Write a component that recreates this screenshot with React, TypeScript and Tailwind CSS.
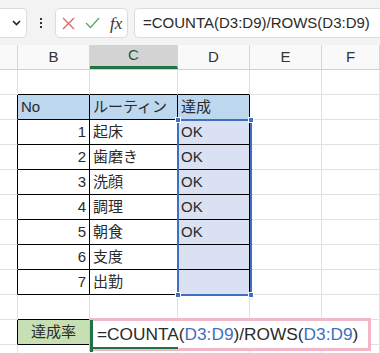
import React from 'react';

const cols = [18, 72, 88, 72, 72, 58];
const font = '"Liberation Sans", "Noto Sans CJK JP", sans-serif';

type Cell = { text?: string; align?: 'left' | 'right' | 'center'; bg?: string; table?: boolean };

// rows 1..12 of the sheet, columns A..F
const rows: Cell[][] = [
  [{}, {}, {}, {}, {}, {}],
  [{}, { text: 'No', bg: 'bg-[#bdd7ee]', table: true }, { text: 'ルーティン', bg: 'bg-[#bdd7ee]', table: true }, { text: '達成', bg: 'bg-[#bdd7ee]', table: true }, {}, {}],
  ...[
    ['1', '起床', 'OK'],
    ['2', '歯磨き', 'OK'],
    ['3', '洗顔', 'OK'],
    ['4', '調理', 'OK'],
    ['5', '朝食', 'OK'],
    ['6', '支度', ''],
    ['7', '出勤', ''],
  ].map(([n, r, d]) => [
    {},
    { text: n, align: 'right' as const, table: true },
    { text: r, table: true },
    { text: d, bg: 'bg-[#d9e1f2]', table: true },
    {},
    {},
  ]),
  [{}, {}, {}, {}, {}, {}],
  [{}, { text: '達成率', align: 'center' as const, bg: 'bg-[#c6e0b4]', table: true }, {}, {}, {}, {}],
  [{}, {}, {}, {}, {}, {}],
];

function isTable(r: number, c: number) {
  return !!rows[r]?.[c]?.table;
}

function Handle({ className }: { className: string }) {
  return <div className={`absolute w-[6px] h-[6px] bg-[#3f6fc1] border border-white ${className}`} />;
}

export default function App() {
  return (
    <div className="w-[380px] h-[353px] overflow-hidden bg-white text-[#2a2a2a]" style={{ fontFamily: font }}>
      {/* formula bar */}
      <div className="h-[45px] bg-[#f3f3f3] flex items-start pt-[8px] gap-[6px]">
        <div className="w-[27px] h-[30px] bg-white border border-[#dcdcdc] rounded-r-[5px] border-l-0 flex items-center justify-end pr-[5px]">
          <svg width="9" height="6" viewBox="0 0 9 6"><path d="M1 1l3.5 3.5L8 1" stroke="#222" strokeWidth="1.6" fill="none" /></svg>
        </div>
        <div className="w-[16px] h-[30px] flex flex-col items-center justify-center gap-[2px]">
          <div className="w-[2px] h-[2px] bg-[#333]" />
          <div className="w-[2px] h-[2px] bg-[#333]" />
          <div className="w-[2px] h-[2px] bg-[#333]" />
        </div>
        <div className="w-[73px] h-[30px] bg-white border border-[#dcdcdc] rounded-[5px] flex items-center pl-[6px] gap-[10px]">
          <svg width="13" height="13" viewBox="0 0 13 13"><path d="M1 1l11 11M12 1L1 12" stroke="#e06666" strokeWidth="1.3" /></svg>
          <svg width="15" height="12" viewBox="0 0 15 12"><path d="M1 6l4.5 4.5L14 1" stroke="#58a86e" strokeWidth="1.3" fill="none" /></svg>
          <span className="text-[17px] italic text-[#333] leading-none" style={{ fontFamily: '"Liberation Serif", serif' }}>fx</span>
        </div>
        <div className="flex-1 h-[30px] bg-white border border-[#dcdcdc] rounded-l-[5px] border-r-0 flex items-center pl-[8px] text-[15px]">
          =COUNTA(D3:D9)/ROWS(D3:D9)
        </div>
      </div>

      {/* column headers */}
      <div className="flex h-[25px] bg-[#f9f9f9] border-b border-[#d0d0d0]">
        {['', 'B', 'C', 'D', 'E', 'F'].map((h, i) => (
          <div
            key={i}
            style={{ width: cols[i] }}
            className={`shrink-0 flex items-center justify-center text-[15px] border-r border-[#d6d6d6] ${
              h === 'C' ? 'bg-[#d3d3d3] text-[#1e5a3a] border-b-[3px] border-b-[#217346]' : 'text-[#333]'
            }`}
          >
            {h}
          </div>
        ))}
      </div>

      {/* grid */}
      <div className="relative">
        {rows.map((row, r) => (
          <div key={r} className="flex h-[25px]">
            {row.map((cell, c) => {
              const rightBlack = isTable(r, c) || isTable(r, c + 1);
              const bottomBlack = isTable(r, c) || isTable(r + 1, c);
              const just = cell.align === 'right' ? 'justify-end pr-[3px]' : cell.align === 'center' ? 'justify-center' : 'justify-start pl-[3px]';
              return (
                <div
                  key={c}
                  style={{ width: cols[c] }}
                  className={`shrink-0 flex items-center text-[15px] border-r border-b ${just} ${cell.bg ?? 'bg-white'} ${
                    rightBlack ? 'border-r-black' : 'border-r-[#e1e1e1]'
                  } ${bottomBlack ? 'border-b-black' : 'border-b-[#e1e1e1]'}`}
                >
                  {cell.text}
                </div>
              );
            })}
          </div>
        ))}

        {/* reference range D3:D9 */}
        <div className="absolute left-[177px] top-[49px] w-[75px] h-[177px] border-2 border-[#3f6fc1] pointer-events-none">
          <Handle className="-left-[4px] -top-[4px]" />
          <Handle className="-right-[4px] -top-[4px]" />
          <Handle className="-left-[4px] -bottom-[4px]" />
          <Handle className="-right-[4px] -bottom-[4px]" />
        </div>

        {/* in-cell edit box C11 */}
        <div className="absolute left-[89px] top-[248px] w-[282px] h-[33px] bg-white border-[3px] border-[#f4b7ca] flex items-center pl-[5px] text-[17.3px] whitespace-nowrap">
          <div className="absolute -left-[2px] -top-[1px] w-[3px] h-[32px] bg-[#217346]" />
          <div className="absolute left-0 -bottom-[1px] w-[86px] h-[2px] bg-[#217346]" />
          =COUNTA(<span className="text-[#3f6fc1]">D3:D9</span>)/ROWS(<span className="text-[#3f6fc1]">D3:D9</span>)
        </div>
      </div>
    </div>
  );
}
